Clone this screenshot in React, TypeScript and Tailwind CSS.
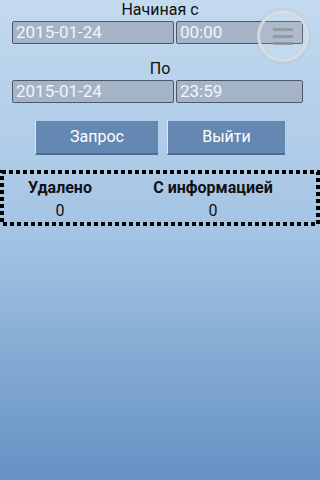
import React from 'react';

const Field: React.FC<{ value: string; width: string }> = ({ value, width }) => (
  <div
    className={`${width} h-[23px] flex items-center pl-[3px] rounded-[2px] border border-[#4d5966] bg-[#a4b3c5] text-[17px] leading-none text-[#f3f5f8]`}
  >
    {value}
  </div>
);

const DottedFrame: React.FC = () => (
  <svg className="absolute inset-0 w-full h-full" width="320" height="56" viewBox="0 0 320 56">
    <rect x="2" y="2" width="316" height="52" fill="none" stroke="#000" strokeWidth="4" strokeDasharray="4 3" />
  </svg>
);

const MenuButton: React.FC = () => (
  <div className="absolute left-[257px] top-[10px] w-[52px] h-[52px] rounded-full border-[3px] border-[#d9dde1]/90 bg-white/10 shadow-[0_0_3px_rgba(160,170,180,0.6)] flex flex-col items-center justify-center gap-[4px]">
    <div className="w-[20px] h-[3px] bg-[#8893a0]/80" />
    <div className="w-[20px] h-[3px] bg-[#8893a0]/80" />
    <div className="w-[20px] h-[3px] bg-[#8893a0]/80" />
  </div>
);

export default function App() {
  return (
    <div
      className="relative w-[320px] h-[480px] overflow-hidden bg-gradient-to-b from-[#c3daef] via-[#a3c3e3] to-[#6691c3] text-[#111]"
      style={{ fontFamily: 'Roboto, "Noto Sans", sans-serif' }}
    >
      <div className="h-[19px] flex items-center justify-center text-[16px]">Начиная с</div>
      <div className="mt-[2px] flex gap-[2px] pl-[12px]">
        <Field value="2015-01-24" width="w-[162px]" />
        <Field value="00:00" width="w-[127px]" />
      </div>

      <div className="mt-[14px] h-[22px] flex items-center justify-center text-[16px]">По</div>
      <div className="flex gap-[2px] pl-[12px]">
        <Field value="2015-01-24" width="w-[162px]" />
        <Field value="23:59" width="w-[127px]" />
      </div>

      <div className="mt-[18px] flex pl-[35px] gap-[9px]">
        <button className="w-[123px] h-[34px] bg-[#6588b3] border-l border-l-[#dfe8f2] border-b-2 border-b-[#4e6c90] text-white text-[16px]">
          Запрос
        </button>
        <button className="w-[118px] h-[34px] bg-[#6588b3] border-l border-l-[#dfe8f2] border-b-2 border-b-[#4e6c90] text-white text-[16px]">
          Выйти
        </button>
      </div>

      <div className="relative mt-[15px] h-[56px] flex pt-[7px]">
        <DottedFrame />
        <div className="w-[120px] flex flex-col items-center">
          <div className="h-[21px] flex items-center font-bold text-[16px]">Удалено</div>
          <div className="h-[26px] flex items-center text-[16px]">0</div>
        </div>
        <div className="ml-[32px] w-[122px] flex flex-col items-center">
          <div className="h-[21px] flex items-center font-bold text-[16px] whitespace-nowrap">С информацией</div>
          <div className="h-[26px] flex items-center text-[16px]">0</div>
        </div>
      </div>

      <MenuButton />
    </div>
  );
}
